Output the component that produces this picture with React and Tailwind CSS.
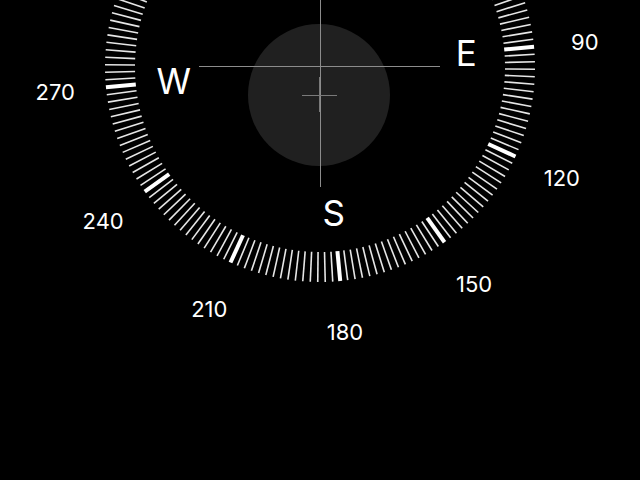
import React from "react";

const CX = 320;
const CY = 67;
const ROT = 5.4; // degrees, dial rotated counter-clockwise

function polar(r, bearing) {
  const a = ((bearing - ROT) * Math.PI) / 180;
  return [CX + r * Math.sin(a), CY - r * Math.cos(a)];
}

export default function App() {
  const ticks = [];
  for (let b = 0; b < 360; b += 2) {
    const major = b % 30 === 0;
    const [x1, y1] = polar(185, b);
    const [x2, y2] = polar(215, b);
    ticks.push(
      <line
        key={b}
        x1={x1}
        y1={y1}
        x2={x2}
        y2={y2}
        stroke={major ? "#ffffff" : "#e6e6e6"}
        strokeWidth={major ? 4 : 1.6}
      />
    );
  }

  const degLabels = [90, 120, 150, 180, 210, 240, 270].map((b) => {
    const [x, y] = polar(266, b);
    return (
      <text
        key={b}
        x={x}
        y={y}
        textAnchor="middle"
        dominantBaseline="central"
        fill="#ffffff"
        fontSize="22"
        fontFamily="Inter, 'Open Sans', sans-serif"
      >
        {b}
      </text>
    );
  });

  const cardinals = [
    ["E", 90],
    ["S", 180],
    ["W", 270],
  ].map(([t, b]) => {
    const [x, y] = polar(147, b);
    return (
      <text
        key={t}
        x={x}
        y={y}
        textAnchor="middle"
        dominantBaseline="central"
        fill="#ffffff"
        fontSize="35"
        fontFamily="Inter, 'Open Sans', sans-serif"
      >
        {t}
      </text>
    );
  });

  return (
    <div className="w-[640px] h-[480px] bg-black overflow-hidden">
      <svg width="640" height="480" viewBox="0 0 640 480" className="block">
        <circle cx="319" cy="95" r="71" fill="#202020" />
        <g>{ticks}</g>
        {degLabels}
        {cardinals}
        <g shapeRendering="crispEdges">
          <rect x="320" y="0" width="1" height="187" fill="#8c8c8c" />
          <rect x="199" y="66" width="241" height="1" fill="#8c8c8c" />
          <rect x="302" y="95" width="35" height="1" fill="#7a7a7a" />
          <rect x="319" y="77" width="1" height="35" fill="#7a7a7a" />
        </g>
      </svg>
    </div>
  );
}
